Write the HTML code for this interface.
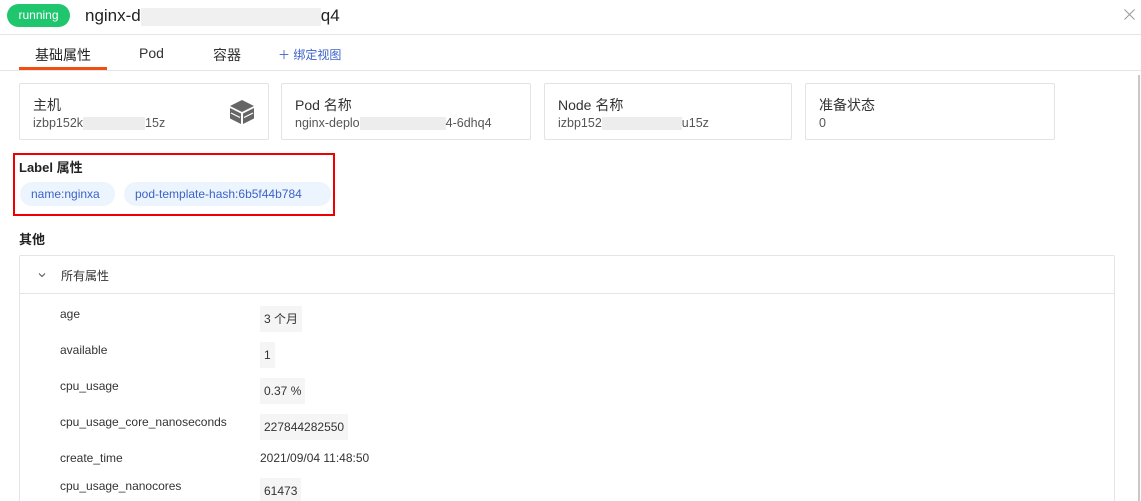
<!DOCTYPE html>
<html style="width:1141px;height:501px;overflow:hidden"><head><meta charset="utf-8"><style>
*{box-sizing:border-box;margin:0;padding:0}
body{width:1141px;height:501px;overflow:hidden;background:#fff;font-family:"Liberation Sans","Noto Sans CJK SC",sans-serif;color:#333;position:relative}
.a{position:absolute}
.card{position:absolute;top:83px;height:57px;border:1px solid #e3e3e6;border-radius:2px;padding:12px 13px}
.card .t{font-size:14px;color:#333;line-height:18px}
.card .v{font-size:12.5px;color:#555;line-height:17px;margin-top:1px}
.blur{display:inline-block;background:#ededed;height:13px;vertical-align:middle}
.tag{position:absolute;top:182px;height:24px;border-radius:12px;background:#ecf4fd;color:#3d63c9;font-size:12px;line-height:24px;padding:0 11px}
.k{position:absolute;left:60px;font-size:12px;color:#333}
.val{position:absolute;left:260px;font-size:12px;color:#333;background:#f5f5f5;padding:0 4px;height:26px;line-height:26px}
</style></head><body>
<div class="a" style="left:7px;top:4px;width:63px;height:23px;border-radius:12px;background:#1fc66e;color:#fff;font-size:12px;line-height:23px;text-align:center">running</div>
<div class="a" style="left:85px;top:5px;font-size:17px;color:#222;line-height:22px">nginx-d<span class="blur" style="width:180px;height:18px;background:#f0f0f0"></span>q4</div>
<svg class="a" style="left:1124px;top:9px" width="11" height="11" viewBox="0 0 11 11"><path d="M0.5 0.5L10.5 10.5M10.5 0.5L0.5 10.5" stroke="#999" stroke-width="1"/></svg>
<div class="a" style="left:0;top:34px;width:1141px;height:1px;background:#e3e3e8"></div>
<div class="a" style="left:35px;top:45px;font-size:14px;color:#222">基础属性</div>
<div class="a" style="left:139px;top:45px;font-size:14px;color:#333">Pod</div>
<div class="a" style="left:213px;top:45px;font-size:14px;color:#333">容器</div>
<div class="a" style="left:278px;top:46px;font-size:12px;color:#3d63c9">＋ 绑定视图</div>
<div class="a" style="left:19px;top:67px;width:88px;height:3px;background:#f04e12"></div>
<div class="a" style="left:0;top:70px;width:1141px;height:1px;background:#e3e3e8"></div>
<div class="a" style="left:1138px;top:75px;width:2px;height:426px;background:#c8c8c8"></div>
<div class="card" style="left:19px;width:250px"><div class="t">主机</div><div class="v">izbp152k<span class="blur" style="width:62px"></span>15z</div>
<svg class="a" style="left:209px;top:15px" width="26" height="26" viewBox="0 0 26 26"><path d="M13 1 L25 7 L13 13 L1 7Z" fill="#666"/><path d="M1 9 L12 14.5 L12 25 L1 19.5Z" fill="#666"/><path d="M25 9 L14 14.5 L14 25 L25 19.5Z" fill="#666"/><path d="M2 14 L11 18.5" stroke="#fff" stroke-width="1.2"/><path d="M24 14 L15 18.5" stroke="#fff" stroke-width="1.2"/></svg></div>
<div class="card" style="left:281px;width:250px"><div class="t">Pod 名称</div><div class="v">nginx-deplo<span class="blur" style="width:86px"></span>4-6dhq4</div></div>
<div class="card" style="left:544px;width:248px"><div class="t">Node 名称</div><div class="v">izbp152<span class="blur" style="width:80px"></span>u15z</div></div>
<div class="card" style="left:805px;width:250px"><div class="t">准备状态</div><div class="v">0</div></div>
<div class="a" style="left:13px;top:153px;width:322px;height:63px;border:2px solid #e00"></div>
<div class="a" style="left:19px;top:157px;font-size:13px;font-weight:bold;color:#222">Label 属性</div>
<div class="tag" style="left:20px;width:95px">name:nginxa</div>
<div class="tag" style="left:124px;width:207px">pod-template-hash:6b5f44b784</div>
<div class="a" style="left:19px;top:229px;font-size:13px;font-weight:bold;color:#222">其他</div>
<div class="a" style="left:19px;top:255px;width:1096px;height:260px;border:1px solid #e3e3e8;border-radius:2px"></div>
<div class="a" style="left:19px;top:293px;width:1096px;height:1px;background:#e3e3e8"></div>
<svg class="a" style="left:38px;top:272px" width="8" height="6" viewBox="0 0 8 6"><path d="M1 1.5L4 4.5L7 1.5" stroke="#555" stroke-width="1.1" fill="none"/></svg>
<div class="a" style="left:61px;top:267px;font-size:12px;color:#333">所有属性</div>
<div class="k" style="top:307px">age</div><div class="val" style="top:306px">3 个月</div>
<div class="k" style="top:343px">available</div><div class="val" style="top:342px">1</div>
<div class="k" style="top:379px">cpu_usage</div><div class="val" style="top:378px">0.37 %</div>
<div class="k" style="top:415px">cpu_usage_core_nanoseconds</div><div class="val" style="top:414px">227844282550</div>
<div class="k" style="top:451px">create_time</div><div class="a" style="left:260px;top:451px;font-size:12px">2021/09/04 11:48:50</div>
<div class="k" style="top:479px">cpu_usage_nanocores</div><div class="val" style="top:478px">61473</div>
</body></html>
